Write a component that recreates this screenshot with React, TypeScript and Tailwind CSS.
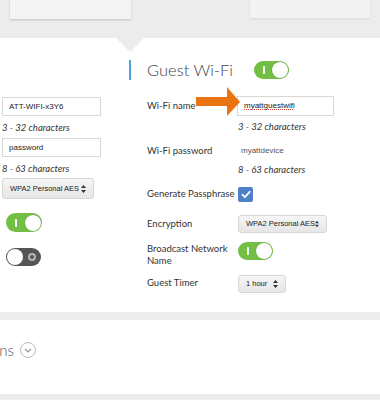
import React from "react"

const lato = { fontFamily: "Lato, 'Open Sans', sans-serif" }
const arial = { fontFamily: "'Liberation Sans', Arial, sans-serif" }

function Toggle({ on = true, className = "" }: { on?: boolean; className?: string }) {
  if (!on) {
    return (
      <div className={`flex items-center w-[35px] h-[18px] rounded-full bg-[#555555] px-[1px] ${className}`}>
        <div className="w-[16px] h-[16px] rounded-full bg-white" />
        <div className="ml-auto mr-[4px] w-[8px] h-[8px] rounded-full border-[2px] border-[#b5b5b5]" />
      </div>
    )
  }
  return (
    <div className={`flex items-center w-[35px] h-[18px] rounded-full bg-[#72bf44] px-[1px] ${className}`}>
      <div className="ml-[8px] w-[2px] h-[8px] bg-white rounded-[1px]" />
      <div className="ml-auto w-[16px] h-[16px] rounded-full bg-white shadow-[0_0_1px_rgba(0,0,0,0.4)]" />
    </div>
  )
}

function SelectBox({ label, className = "" }: { label: string; className?: string }) {
  return (
    <div
      className={`flex items-center h-[18px] px-[7px] rounded-[3px] border border-[#d6d6d6] bg-gradient-to-b from-[#f6f6f6] to-[#e6e6e6] text-[7.5px] text-[#222] ${className}`}
      style={arial}
    >
      <span className="whitespace-nowrap">{label}</span>
      <svg className="ml-auto" width="5" height="8" viewBox="0 0 5 8">
        <path d="M2.5 0 L5 3 L0 3 Z M2.5 8 L5 5 L0 5 Z" fill="#333" />
      </svg>
    </div>
  )
}

function TextInput({ value, className = "", spell = false }: { value: string; className?: string; spell?: boolean }) {
  return (
    <div
      className={`flex items-center h-[19px] px-[6px] border border-[#d8d8d8] bg-white text-[8px] text-[#222] ${className}`}
      style={arial}
    >
      <span className={spell ? "underline decoration-dotted decoration-[#e04040] underline-offset-[1px]" : ""}>{value}</span>
    </div>
  )
}

function Helper({ children, className = "" }: { children: React.ReactNode; className?: string }) {
  return <div className={`text-[9.5px] italic text-[#333] leading-[12px] whitespace-nowrap ${className}`}>{children}</div>
}

export default function App() {
  return (
    <div className="w-[380px] h-[400px] bg-[#ececec] overflow-hidden flex flex-col" style={lato}>
      {/* top cards */}
      <div className="h-[38px] flex items-start shrink-0">
        <div className="ml-[10px] w-[121px] h-[19px] bg-[#f4f4f4] shadow-[0_1px_2px_rgba(0,0,0,0.18)]" />
        <div className="ml-auto mr-[10px] w-[120px] h-[18px] bg-[#f3f3f3] shadow-[0_1px_2px_rgba(0,0,0,0.08)]" />
      </div>

      {/* guest wifi panel */}
      <div className="relative h-[274px] bg-white shrink-0">
        <div className="absolute left-[116px] top-0 w-0 h-0 border-l-[14px] border-r-[14px] border-t-[14px] border-l-transparent border-r-transparent border-t-[#ececec]" />

        <div className="flex">
          {/* left (cut off) column */}
          <div className="w-[110px] pl-[2px] pt-[59px] flex flex-col">
            <TextInput value="ATT-WIFI-x3Y6" className="w-[99px]" />
            <Helper className="mt-[6px]">3 - 32 characters</Helper>
            <TextInput value="password" className="w-[99px] mt-[4px]" />
            <Helper className="mt-[6px]">8 - 63 characters</Helper>
            <SelectBox label="WPA2 Personal AES" className="w-[92px] h-[21px] mt-[3px]" />
            <Toggle className="ml-[4px] mt-[14px] w-[36px] h-[19px]" />
            <Toggle on={false} className="ml-[4px] mt-[16px]" />
          </div>

          {/* right column */}
          <div className="ml-[19px] pt-[22px] flex flex-col text-[#333]">
            <div className="flex items-center h-[20px]">
              <div className="w-[2px] h-[20px] bg-[#4aa3d8]" />
              <div className="ml-[16px] w-[84px] text-[16.5px] font-light text-[#444] leading-none whitespace-nowrap">Guest Wi-Fi</div>
              <Toggle className="ml-[23px]" />
            </div>

            <div className="relative flex items-center mt-[16px] h-[20px] pl-[18px]">
              <div className="w-[90px] text-[9.5px]">Wi-Fi name</div>
              <TextInput value="myattguestwifi" spell className="w-[97px] h-[20px]" />
              <svg className="absolute left-[67px] top-[-9px]" width="44" height="30" viewBox="0 0 44 30">
                <path d="M0 10 L31 10 L31 0 L44 15 L31 29 L31 19 L0 19 Z" fill="#ea7312" />
              </svg>
            </div>
            <Helper className="mt-[5px] ml-[109px]">3 - 32 characters</Helper>

            <div className="flex items-center mt-[8px] h-[20px] pl-[18px]">
              <div className="w-[94px] text-[9.5px]">Wi-Fi password</div>
              <div className="text-[8px] text-[#555]" style={arial}>myattdevice</div>
            </div>
            <Helper className="mt-[3px] ml-[109px]">8 - 63 characters</Helper>

            <div className="flex items-center mt-[9px] h-[19px] pl-[18px]">
              <div className="w-[91px] text-[9.5px] whitespace-nowrap">Generate Passphrase</div>
              <div className="w-[15px] h-[15px] rounded-[2px] bg-[#4d80c6] flex items-center justify-center">
                <svg width="10" height="9" viewBox="0 0 10 9">
                  <path d="M1.5 4.8 L4 7.2 L8.6 1.8" fill="none" stroke="white" strokeWidth="1.8" strokeLinecap="round" strokeLinejoin="round" />
                </svg>
              </div>
            </div>

            <div className="flex items-center mt-[11px] h-[18px] pl-[18px]">
              <div className="w-[91px] text-[9.5px]">Encryption</div>
              <SelectBox label="WPA2 Personal AES" className="w-[89px]" />
            </div>

            <div className="flex items-start mt-[9px] pl-[18px]">
              <div className="w-[91px] text-[9.5px] leading-[12px] pt-[1px]">
                Broadcast Network
                <br />
                Name
              </div>
              <Toggle />
            </div>

            <div className="flex items-center mt-[8px] h-[17px] pl-[18px]">
              <div className="w-[91px] text-[9.5px]">Guest Timer</div>
              <SelectBox label="1 hour" className="w-[48px] h-[17px]" />
            </div>
          </div>
        </div>
      </div>

      {/* advanced options strip */}
      <div className="mt-[8px] h-[74px] bg-white flex items-start pt-[22px] shrink-0">
        <div className="w-[14px] h-[16px] flex items-center justify-end">
          <span className="whitespace-nowrap text-[15px] font-light text-[#555] leading-none">Advanced Options</span>
        </div>
        <div className="ml-[6px] w-[16px] h-[16px] rounded-full border-[1.5px] border-[#bdbdbd] flex items-center justify-center">
          <svg width="8" height="5" viewBox="0 0 8 5">
            <path d="M1 1 L4 4 L7 1" fill="none" stroke="#999" strokeWidth="1.2" />
          </svg>
        </div>
      </div>
    </div>
  )
}
